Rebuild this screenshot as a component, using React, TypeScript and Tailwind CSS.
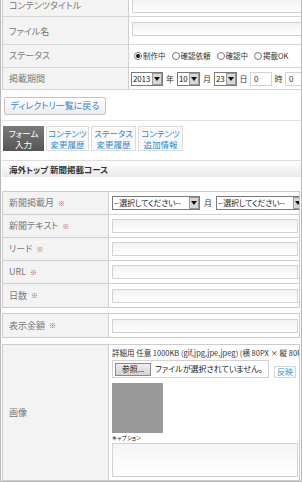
import React from 'react'

const font = "font-['Noto_Sans_CJK_JP','Noto_Sans',sans-serif] [font-feature-settings:'palt']"

function Sel({ text, w }: { text: string; w: string }) {
  return (
    <div className={`flex h-[14px] shrink-0 items-stretch border border-[#7a7a7a] bg-white ${w}`}>
      <span className="flex-1 overflow-hidden whitespace-nowrap pl-px text-[8px] leading-[12px] tracking-[-0.2px] text-[#222]">
        {text}
      </span>
      <span className="flex w-[10px] items-center justify-center border border-[#999] bg-[#d8d8d8]">
        <svg width="6" height="4" viewBox="0 0 6 4">
          <path d="M0 0h6L3 4z" fill="#111" />
        </svg>
      </span>
    </div>
  )
}

function Field({ className = '' }: { className?: string }) {
  return (
    <div
      className={`h-[14px] border border-[#d2d2d2] bg-gradient-to-b from-[#f2f2f2] to-white ${className}`}
    />
  )
}

function Radio({ on }: { on?: boolean }) {
  return (
    <span className="inline-flex h-[8px] w-[8px] shrink-0 items-center justify-center rounded-full border border-[#777] bg-white">
      {on && <span className="h-[4px] w-[4px] rounded-full bg-[#111]" />}
    </span>
  )
}

function Req() {
  return <span className="ml-[4px] text-[7px] leading-none text-[#e8414b]">※</span>
}

function FormRow({ label, req, children, h = 'h-[23px]' }: { label: string; req?: boolean; children: React.ReactNode; h?: string }) {
  return (
    <div className={`grid grid-cols-[105px_minmax(0,1fr)] border-b border-[#d0d0d0] last:border-b-0 ${h}`}>
      <div className="flex items-center whitespace-nowrap bg-[#f3f3f3] pl-[6px] text-[9px] text-[#777]">
        {label}
        {req && <Req />}
      </div>
      <div className="flex items-center overflow-hidden border-l border-[#cfcfcf] pl-[3px] pr-[1px]">
        {children}
      </div>
    </div>
  )
}

export default function App() {
  return (
    <div
      className={`h-[482px] w-[302px] overflow-hidden border-x border-b border-[#b8b8b8] bg-white pl-px text-[9px] ${font}`}
    >
      {/* 基本情報 */}
      <div className="border-l border-[#cccccc]">
        <div className="grid h-[17px] grid-cols-[125px_minmax(0,1fr)] border-b border-[#d6d6d6]">
          <div className="bg-[#f3f3f3] pl-[6px] leading-[12px] text-[#777]">コンテンツタイトル</div>
          <div className="border-l border-[#cfcfcf] pl-[3px]">
            <Field className="-mt-px w-[200px]" />
          </div>
        </div>
        <div className="grid h-[28px] grid-cols-[125px_minmax(0,1fr)] border-b border-[#d6d6d6]">
          <div className="bg-[#f3f3f3] pl-[6px] pt-[9px] leading-[12px] text-[#777]">ファイル名</div>
          <div className="border-l border-[#cfcfcf] pl-[3px] pt-[5px]">
            <Field className="w-[200px]" />
          </div>
        </div>
        <div className="grid h-[23px] grid-cols-[125px_minmax(0,1fr)] border-b border-[#d6d6d6]">
          <div className="flex items-center bg-[#f3f3f3] pl-[6px] text-[#777]">ステータス</div>
          <div className="flex items-center gap-[1px] overflow-hidden whitespace-nowrap border-l border-[#cfcfcf] pl-[5px] text-[7.5px] text-[#333]">
            <Radio on />
            <span className="mr-[5px]">制作中</span>
            <Radio />
            <span className="mr-[5px]">確認依頼</span>
            <Radio />
            <span className="mr-[5px]">確認中</span>
            <Radio />
            <span>掲載OK</span>
          </div>
        </div>
        <div className="grid h-[22px] grid-cols-[125px_minmax(0,1fr)] border-b border-[#d6d6d6]">
          <div className="flex items-center bg-[#f3f3f3] pl-[6px] text-[#777]">掲載期間</div>
          <div className="flex items-center overflow-hidden whitespace-nowrap border-l border-[#cfcfcf] pl-[2px] text-[8px] text-[#333]">
            <Sel text="2013" w="w-[32px]" />
            <span className="w-[14px] shrink-0 text-center">年</span>
            <Sel text="10" w="w-[23px]" />
            <span className="w-[14px] shrink-0 text-center">月</span>
            <Sel text="23" w="w-[23px]" />
            <span className="w-[13px] shrink-0 text-center">日</span>
            <div className="flex h-[14px] w-[22px] shrink-0 items-center border border-[#d2d2d2] pl-[3px]">0</div>
            <span className="w-[13px] shrink-0 text-center">時</span>
            <div className="flex h-[14px] w-[30px] shrink-0 items-center border border-[#d2d2d2] pl-[3px]">0</div>
          </div>
        </div>
      </div>

      <button className="ml-[2px] mt-[7px] flex h-[18px] w-[102px] items-center justify-center rounded-[2px] border border-[#c4c4c4] bg-gradient-to-b from-white to-[#ececec] text-[9px] text-[#3a87d0]">
        ディレクトリ一覧に戻る
      </button>

      <div className="mt-[5px] border-t border-[#e2e2e2] pt-[5px]">
        {/* タブ */}
        <div className="flex gap-[2px] whitespace-nowrap pl-px text-[8.5px] leading-[11px]">
          <div className="flex h-[25px] w-[41px] flex-col items-center justify-center bg-gradient-to-b from-[#7a7a7a] to-[#555] text-white">
            <span>フォーム</span>
            <span>入力</span>
          </div>
          <div className="flex h-[25px] w-[43px] flex-col items-center justify-center border border-[#dcdcdc] bg-[#f9f9f9] text-[#2f8bd6]">
            <span>コンテンツ</span>
            <span>変更履歴</span>
          </div>
          <div className="flex h-[25px] w-[45px] flex-col items-center justify-center border border-[#dcdcdc] bg-[#f9f9f9] text-[#2f8bd6]">
            <span>ステータス</span>
            <span>変更履歴</span>
          </div>
          <div className="flex h-[25px] w-[45px] flex-col items-center justify-center border border-[#dcdcdc] bg-[#f9f9f9] text-[#2f8bd6]">
            <span>コンテンツ</span>
            <span>追加情報</span>
          </div>
        </div>

        <div className="mt-[9px] flex h-[17px] items-center border-t border-[#dedede] bg-gradient-to-b from-white to-[#e9e9e9] pl-[7px] text-[8.5px] font-bold text-[#333]">
          海外トップ 新聞掲載コース
        </div>

        {/* 入力フォーム */}
        <div className="mt-[14px] mr-px border border-[#cccccc]">
          <FormRow label="新聞掲載月" req>
            <div className="flex items-center gap-[3px] whitespace-nowrap text-[8px] text-[#333]">
              <Sel text="--選択してください--" w="w-[88px]" />
              <span className="w-[10px] text-center">月</span>
              <Sel text="--選択してください--" w="w-[88px]" />
            </div>
          </FormRow>
          <FormRow label="新聞テキスト" req>
            <Field className="w-full" />
          </FormRow>
          <FormRow label="リード" req>
            <Field className="w-full" />
          </FormRow>
          <FormRow label="URL" req>
            <Field className="w-full" />
          </FormRow>
          <FormRow label="日数" req>
            <Field className="w-full" />
          </FormRow>
        </div>

        <div className="mt-[5px] mr-px border border-[#cccccc]">
          <FormRow label="表示金額" req>
            <Field className="w-full" />
          </FormRow>
        </div>

        <div className="mt-[6px] mr-px grid h-[137px] grid-cols-[105px_minmax(0,1fr)] border border-[#cccccc]">
          <div className="flex items-center bg-[#f3f3f3] pl-[6px] text-[9px] text-[#777]">画像</div>
          <div className="flex flex-col overflow-hidden border-l border-[#cfcfcf] pl-[3px] pr-[1px] pt-[3px]">
            <div className="whitespace-nowrap text-[7.5px] leading-[10px] text-[#333]">
              詳細用 任意 1000KB (gif,jpg,jpe,jpeg) (横 80PX × 縦 80PX)
            </div>
            <div className="mt-[2px] flex items-end gap-[5px]">
              <div className="flex h-[18px] w-[157px] shrink-0 items-center gap-[4px] overflow-hidden border border-[#d2d2d2] pl-[2px]">
                <span className="flex h-[13px] w-[36px] shrink-0 items-center justify-center border border-[#8a8a8a] bg-gradient-to-b from-[#f0f0f0] to-[#d2d2d2] text-[8px] text-[#222]">
                  参照...
                </span>
                <span className="whitespace-nowrap text-[8px] text-[#222]">ファイルが選択されていません。</span>
              </div>
              <span className="flex h-[12px] w-[22px] shrink-0 items-center justify-center border border-[#d6d6d6] bg-white text-[8px] text-[#2f8bd6]">
                反映
              </span>
            </div>
            <div className="mt-[5px] h-[50px] w-[51px] bg-[#999]" />
            <div className="mt-[2px] text-[5.5px] leading-[6px] text-[#111]">キャプション</div>
            <div className="mt-[2px] h-[34px] w-full border border-[#d2d2d2] bg-gradient-to-b from-[#f5f5f5] to-white" />
          </div>
        </div>
      </div>
    </div>
  )
}
